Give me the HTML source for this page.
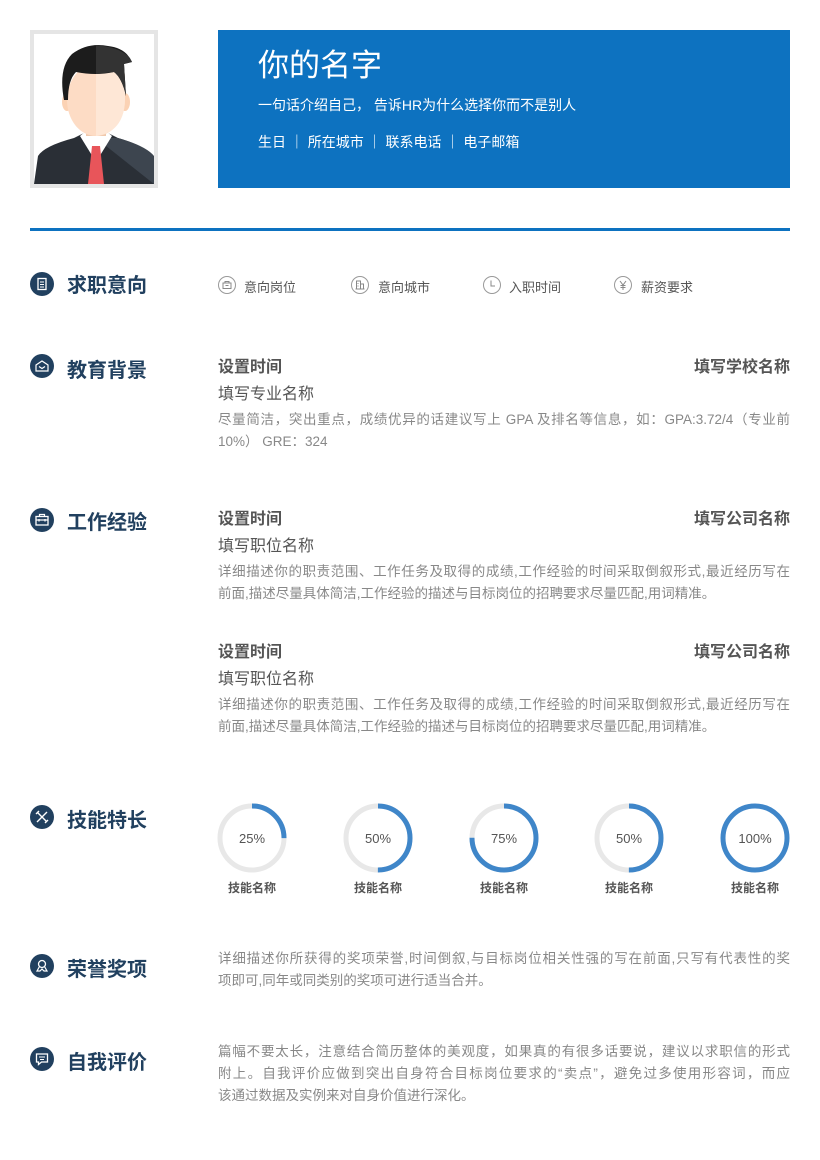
<!DOCTYPE html><html><head><meta charset="utf-8"><style>
*{margin:0;padding:0;box-sizing:border-box}
body{width:820px;height:1160px;background:#fff;font-family:"Liberation Sans","Noto Sans CJK SC",sans-serif;position:relative;overflow:hidden}
.a{position:absolute;white-space:nowrap}
.photo{left:30px;top:30px;width:128px;height:158px;border:4px solid #e5e5e5;overflow:hidden;background:#fff}
.hdr{left:218px;top:30px;width:572px;height:158px;background:#0d72c0;color:#fff}
.line{left:30px;top:228px;width:760px;height:3px;background:#0d72c0}
.ic{width:24px;height:24px;left:30px}
.st{left:67px;font-size:20px;font-weight:bold;color:#21405f}
.h{font-size:16px;font-weight:bold;color:#555}
.sub{font-size:16px;color:#555}
.p{font-size:13.5px;color:#888;line-height:22px;width:572px}
.p div{white-space:nowrap;overflow:hidden}
.p .j{text-align:justify;text-align-last:justify}
.it{font-size:13px;color:#555;top:277px}
.sm{width:18px;height:18px;top:276px}
.sk{font-size:12px;color:#555;font-weight:bold;top:879px;width:70px;text-align:center}
</style></head><body>
<div class="a photo"><svg width="120" height="150" viewBox="0 0 120 150">
<path d="M0 150 L4 122 Q10 112 40 104 L50 99 L74 99 L84 104 Q112 112 116 122 L120 150Z" fill="#2a2f36"/>
<path d="M62 104 L120 150 L120 122 Q112 112 84 104Z" fill="#3d454f"/>
<path d="M46 102 L62 128 L78 102 L72 97 L52 97Z" fill="#fff"/>
<path d="M58 112 L66 112 L70 150 L54 150Z" fill="#e8555a"/>
<rect x="52" y="88" width="20" height="14" fill="#f0c9ad"/>
<ellipse cx="33" cy="68" rx="5" ry="9" fill="#fbd2b4"/><ellipse cx="91" cy="68" rx="5" ry="9" fill="#fbd2b4"/>
<ellipse cx="62" cy="66" rx="29" ry="36" fill="#fddcc5"/>
<path d="M62 30 L62 102 Q90 98 91 66 L91 40Z" fill="#fee7d6"/>
<path d="M30 66 Q24 34 38 20 Q54 8 74 12 Q92 14 98 28 L90 30 L92 62 Q88 44 80 38 Q62 42 42 38 Q34 46 34 66Z" fill="#1c1c1c"/>
<path d="M62 11 Q92 14 98 28 L90 30 L92 62 Q88 44 80 38 L62 40Z" fill="#333"/>
</svg></div>
<div class="a hdr">
<div class="a" style="left:40px;top:10px;font-size:31px">你的名字</div>
<div class="a" style="left:40px;top:65px;font-size:14px">一句话介绍自己， 告诉HR为什么选择你而不是别人</div>
<div class="a" style="left:40px;top:102px;font-size:14px">生日 ｜ 所在城市 ｜ 联系电话 ｜ 电子邮箱</div>
</div>
<div class="a line"></div>

<svg class="a ic" style="top:272px" viewBox="0 0 24 24"><circle cx="12" cy="12" r="12" fill="#21405f"/><rect x="8" y="6.5" width="8" height="11" fill="none" stroke="#fff" stroke-width="1.3"/><path d="M10 10h4M10 12.5h4M10 15h4" stroke="#fff" stroke-width="1"/></svg>
<div class="a st" style="top:269px">求职意向</div>
<svg class="a sm" style="left:218px" viewBox="0 0 18 18"><circle cx="9" cy="9" r="8.5" fill="none" stroke="#999"/><rect x="5" y="7" width="8" height="5.5" fill="none" stroke="#888"/><path d="M7 7V5.5h4V7M7.5 9.5h3" stroke="#888" fill="none"/></svg><div class="a it" style="left:244px">意向岗位</div>
<svg class="a sm" style="left:351px" viewBox="0 0 18 18"><circle cx="9" cy="9" r="8.5" fill="none" stroke="#999"/><path d="M5.5 13V5h4v8M9.5 8h3v5M4.5 13h9M7 7v1M7 9.5v1" stroke="#888" fill="none"/></svg><div class="a it" style="left:378px">意向城市</div>
<svg class="a sm" style="left:483px" viewBox="0 0 18 18"><circle cx="9" cy="9" r="8.5" fill="none" stroke="#999"/><path d="M8 4.5V10h4" stroke="#888" fill="none"/></svg><div class="a it" style="left:509px">入职时间</div>
<svg class="a sm" style="left:614px" viewBox="0 0 18 18"><circle cx="9" cy="9" r="8.5" fill="none" stroke="#999"/><path d="M6 5l3 4 3-4M9 9v5M6.5 9.5h5M6.5 11.5h5" stroke="#888" fill="none"/></svg><div class="a it" style="left:641px">薪资要求</div>

<svg class="a ic" style="top:354px" viewBox="0 0 24 24"><circle cx="12" cy="12" r="12" fill="#21405f"/><path d="M6 11l6-4 6 4v6H6z M9 12.5l3 2 3-2" fill="none" stroke="#fff" stroke-width="1.2"/></svg>
<div class="a st" style="top:354px">教育背景</div>
<div class="a h" style="left:218px;top:353px">设置时间</div><div class="a h" style="right:30px;top:353px">填写学校名称</div>
<div class="a sub" style="left:218px;top:380px">填写专业名称</div>
<div class="a p" style="left:218px;top:409px"><div class="j">尽量简洁，突出重点，成绩优异的话建议写上 GPA 及排名等信息，如：GPA:3.72/4（专业前</div><div>10%） GRE：324</div></div>

<svg class="a ic" style="top:508px" viewBox="0 0 24 24"><circle cx="12" cy="12" r="12" fill="#21405f"/><rect x="6" y="8.5" width="12" height="8.5" fill="none" stroke="#fff" stroke-width="1.3"/><path d="M9.5 8.5V6.5h5v2M6 12h12M9 11v2.5M15 11v2.5" stroke="#fff" stroke-width="1.2" fill="none"/></svg>
<div class="a st" style="top:506px">工作经验</div>
<div class="a h" style="left:218px;top:505px">设置时间</div><div class="a h" style="right:30px;top:505px">填写公司名称</div>
<div class="a sub" style="left:218px;top:532px">填写职位名称</div>
<div class="a p" style="left:218px;top:561px"><div class="j">详细描述你的职责范围、工作任务及取得的成绩,工作经验的时间采取倒叙形式,最近经历写在</div><div>前面,描述尽量具体简洁,工作经验的描述与目标岗位的招聘要求尽量匹配,用词精准。</div></div>
<div class="a h" style="left:218px;top:638px">设置时间</div><div class="a h" style="right:30px;top:638px">填写公司名称</div>
<div class="a sub" style="left:218px;top:665px">填写职位名称</div>
<div class="a p" style="left:218px;top:694px"><div class="j">详细描述你的职责范围、工作任务及取得的成绩,工作经验的时间采取倒叙形式,最近经历写在</div><div>前面,描述尽量具体简洁,工作经验的描述与目标岗位的招聘要求尽量匹配,用词精准。</div></div>

<svg class="a ic" style="top:805px" viewBox="0 0 24 24"><circle cx="12" cy="12" r="12" fill="#21405f"/><path d="M7 7l10 10M17 7L7 17M6 9l3-3M15 18l3-3" stroke="#fff" stroke-width="1.4"/></svg>
<div class="a st" style="top:804px">技能特长</div>
<svg class="a" style="left:0;top:790px" width="820" height="96">
<g fill="none" stroke-width="5">
<circle cx="252" cy="48" r="32" stroke="#e8e8e8"/><circle cx="252" cy="48" r="32" stroke="#3f86c9" stroke-dasharray="50.3 201" transform="rotate(-90 252 48)"/>
<circle cx="378" cy="48" r="32" stroke="#e8e8e8"/><circle cx="378" cy="48" r="32" stroke="#3f86c9" stroke-dasharray="100.5 201" transform="rotate(-90 378 48)"/>
<circle cx="504" cy="48" r="32" stroke="#e8e8e8"/><circle cx="504" cy="48" r="32" stroke="#3f86c9" stroke-dasharray="150.8 201" transform="rotate(-90 504 48)"/>
<circle cx="629" cy="48" r="32" stroke="#e8e8e8"/><circle cx="629" cy="48" r="32" stroke="#3f86c9" stroke-dasharray="100.5 201" transform="rotate(-90 629 48)"/>
<circle cx="755" cy="48" r="32" stroke="#3f86c9"/>
</g>
<g font-size="13" fill="#555" text-anchor="middle" font-family="Liberation Sans,sans-serif">
<text x="252" y="53">25%</text><text x="378" y="53">50%</text><text x="504" y="53">75%</text><text x="629" y="53">50%</text><text x="755" y="53">100%</text></g>
</svg>
<div class="a sk" style="left:217px">技能名称</div><div class="a sk" style="left:343px">技能名称</div><div class="a sk" style="left:469px">技能名称</div><div class="a sk" style="left:594px">技能名称</div><div class="a sk" style="left:720px">技能名称</div>

<svg class="a ic" style="top:954px" viewBox="0 0 24 24"><circle cx="12" cy="12" r="12" fill="#21405f"/><circle cx="12" cy="10" r="3.5" fill="none" stroke="#fff" stroke-width="1.3"/><path d="M9.5 12.5L7 17h3l2-2 2 2h3l-2.5-4.5" fill="none" stroke="#fff" stroke-width="1.2"/></svg>
<div class="a st" style="top:953px">荣誉奖项</div>
<div class="a p" style="left:218px;top:948px"><div class="j">详细描述你所获得的奖项荣誉,时间倒叙,与目标岗位相关性强的写在前面,只写有代表性的奖</div><div>项即可,同年或同类别的奖项可进行适当合并。</div></div>

<svg class="a ic" style="top:1047px" viewBox="0 0 24 24"><circle cx="12" cy="12" r="12" fill="#21405f"/><path d="M6.5 7h11v8h-6l-3 2.5V15h-2z" fill="none" stroke="#fff" stroke-width="1.3"/><path d="M9 10h6M10 12.5h4" stroke="#fff" stroke-width="1.1"/></svg>
<div class="a st" style="top:1046px">自我评价</div>
<div class="a p" style="left:218px;top:1041px"><div class="j">篇幅不要太长，注意结合简历整体的美观度，如果真的有很多话要说，建议以求职信的形式</div><div class="j">附上。自我评价应做到突出自身符合目标岗位要求的“卖点”，避免过多使用形容词，而应</div><div>该通过数据及实例来对自身价值进行深化。</div></div>
</body></html>
